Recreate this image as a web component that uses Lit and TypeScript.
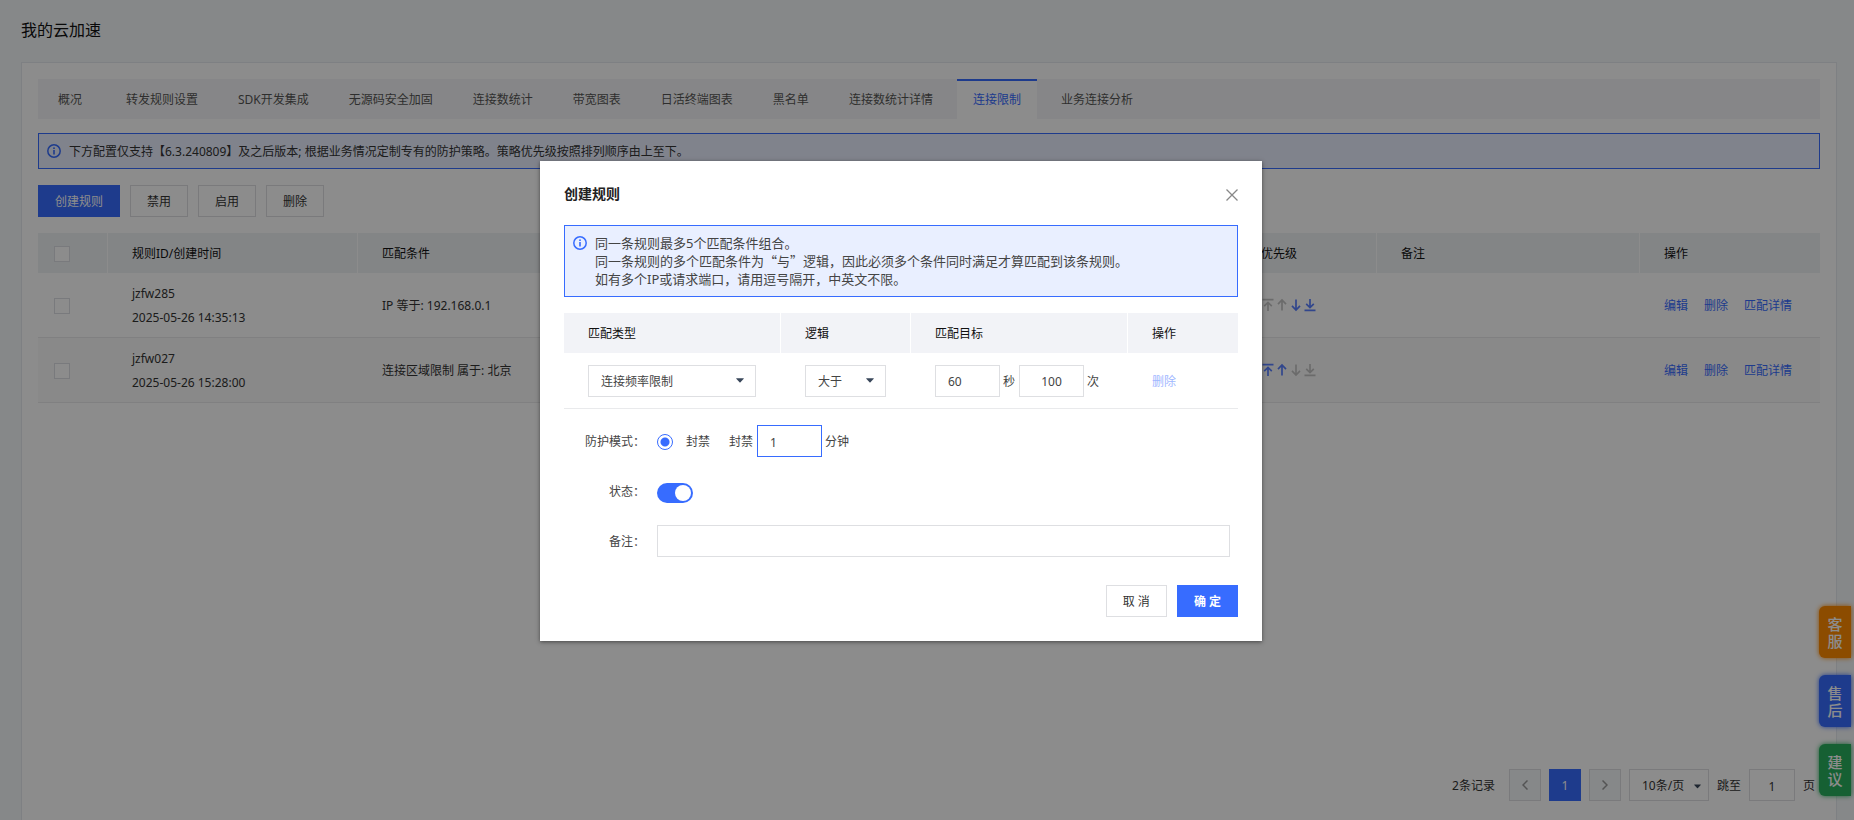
import { LitElement, html, css, svg, nothing } from "lit";
import { customElement, property } from "lit/decorators.js";
import { classMap } from "lit/directives/class-map.js";

const shared = css`
  *,
  *::before,
  *::after {
    box-sizing: border-box;
  }
  button,
  input,
  select {
    font: inherit;
    color: inherit;
    border-radius: 0;
    margin: 0;
  }
  a {
    color: #376cff;
    text-decoration: none;
  }
  .btn {
    height: 32px;
    padding: 2px 16px 0;
    border: 1px solid #dedfe2;
    background: #fff;
    color: #333;
  }
  .btn.primary {
    border-color: #376cff;
    background: #376cff;
    color: #fff;
  }
  .field {
    width: 65px;
    height: 32px;
    padding: 2px 12px 0;
    border: 1px solid #dedfe2;
    background: #fff;
    outline: none;
  }
  .center {
    text-align: center;
  }
  .select {
    position: relative;
    display: inline-flex;
    align-items: center;
  }
  .select select {
    appearance: none;
    width: 100%;
    height: 32px;
    padding: 2px 12px 0;
    border: 1px solid #dedfe2;
    background: #fff;
  }
  .select svg {
    position: absolute;
    right: 12px;
    pointer-events: none;
  }
  table {
    width: 100%;
    table-layout: fixed;
    border-collapse: separate;
    border-spacing: 0;
  }
  th {
    height: 40px;
    padding: 2px 0 0 24px;
    font-weight: 400;
    color: #111;
    text-align: left;
    background: #f2f3f7;
    border-right: 1px solid #fff;
  }
  th:last-child {
    border-right: 0;
  }
  td {
    border-bottom: 1px solid #e9eaec;
  }
`;

const caret = html`<svg width="8" height="5" viewBox="0 0 8 5" aria-hidden="true">
  <path d="M0.300 0.300h7.400v0.500L4.500 4.300Q4 4.800 3.500 4.300L0.300 0.800z" fill="#39475a" />
</svg>`;

@customElement("info-notice")
export class InfoNotice extends LitElement {
  static styles = css`
    :host {
      display: flex;
      gap: 8px;
      padding: 8px;
      border: 1px solid #376cff;
      background: #e9efff;
      color: #333;
    }
    svg {
      flex: none;
      margin-top: 2px;
    }
  `;
  render() {
    return html`<svg width="14" height="14" viewBox="0 0 14 14" aria-hidden="true">
        <circle cx="7" cy="7" r="6.200" fill="none" stroke="#376cff" stroke-width="1.500" />
        <rect x="6.200" y="3.400" width="1.600" height="1.600" fill="#376cff" />
        <rect x="6.200" y="6" width="1.600" height="4.500" fill="#376cff" />
      </svg>
      <div><slot></slot></div>`;
  }
}

@customElement("rule-dialog")
export class RuleDialog extends LitElement {
  static styles = [
    shared,
    css`
      :host {
        display: block;
        width: 722px;
        padding: 24px;
        background: #fff;
        color: #444;
        box-shadow: 0 1px 4px rgba(0, 0, 0, 0.5);
      }
      header {
        display: flex;
        justify-content: space-between;
        align-items: center;
        height: 20px;
        margin-bottom: 20px;
      }
      h2 {
        margin: 0;
        padding-bottom: 2px;
        font-size: 14px;
        font-weight: 700;
        line-height: 18px;
        color: #222;
      }
      .close {
        display: flex;
        padding: 0;
        border: 0;
        background: none;
      }
      info-notice {
        font-size: 13px;
        line-height: 18px;
        margin-bottom: 16px;
        color: #444;
      }
      p {
        margin: 0;
      }
      .quote {
        font-family: "Noto Sans CJK SC", sans-serif;
      }
      td {
        height: 56px;
        padding: 0 0 0 24px;
      }
      .type {
        width: 168px;
      }
      .logic {
        width: 81px;
      }
      .target {
        display: flex;
        align-items: center;
      }
      .unit {
        margin: 0 4px 0 3px;
        padding-top: 2px;
      }
      .faded {
        display: inline-block;
        padding-top: 2px;
        color: #9fb7ff;
      }
      .form {
        display: grid;
        grid-template-columns: 93px 1fr;
        row-gap: 18px;
        margin: 16px 8px 28px 0;
      }
      .name {
        padding-right: 12px;
        line-height: 34px;
        height: 32px;
        text-align: right;
      }
      .row {
        display: flex;
        align-items: center;
      }
      .row label {
        padding-top: 2px;
      }
      .radio {
        appearance: none;
        width: 16px;
        height: 16px;
        border: 1px solid #376cff;
        border-radius: 50%;
        background: radial-gradient(circle, #376cff 4px, #fff 5px);
        margin: 2px 13px 0 0;
      }
      .gap {
        margin: 0 4px 0 19px;
      }
      .active {
        border-color: #376cff;
      }
      .switch {
        appearance: none;
        width: 36px;
        height: 20px;
        padding: 2px;
        border-radius: 10px;
        background: #376cff;
        display: flex;
        justify-content: flex-end;
        margin-top: 4px;
      }
      .switch::before {
        content: "";
        width: 16px;
        height: 16px;
        border-radius: 50%;
        background: #fff;
      }
      .wide {
        width: 100%;
      }
      footer {
        display: flex;
        justify-content: flex-end;
        gap: 10px;
      }
      .strong {
        font-weight: 700;
      }
    `,
  ];
  render() {
    return html`
      <header>
        <h2>创建规则</h2>
        <button class="close" aria-label="关闭">
          <svg width="12" height="12" viewBox="0 0 12 12">
            <path d="M0.500 0.500l11 11M11.500 0.500l-11 11" stroke="#888" stroke-width="1.300" />
          </svg>
        </button>
      </header>
      <info-notice>
        <p>同一条规则最多5个匹配条件组合。</p>
        <p>同一条规则的多个匹配条件为<span class="quote" lang="zh-CN">“与”</span>逻辑，因此必须多个条件同时满足才算匹配到该条规则。</p>
        <p>如有多个IP或请求端口，请用逗号隔开，中英文不限。</p>
      </info-notice>
      <table>
        <colgroup>
          <col width="217" />
          <col width="130" />
          <col width="217" />
          <col />
        </colgroup>
        <thead>
          <tr>
            <th>匹配类型</th>
            <th>逻辑</th>
            <th>匹配目标</th>
            <th>操作</th>
          </tr>
        </thead>
        <tbody>
          <tr>
            <td>
              <span class="select type">
                <select aria-label="匹配类型">
                  <option>连接频率限制</option>
                </select>
                ${caret}
              </span>
            </td>
            <td>
              <span class="select logic">
                <select aria-label="逻辑">
                  <option>大于</option>
                </select>
                ${caret}
              </span>
            </td>
            <td>
              <div class="target">
                <input class="field" aria-label="秒" value="60" />
                <span class="unit">秒</span>
                <input class="field center" aria-label="次" value="100" />
                <span class="unit">次</span>
              </div>
            </td>
            <td><a class="faded" href="#">删除</a></td>
          </tr>
        </tbody>
      </table>
      <div class="form">
        <span class="name">防护模式：</span>
        <div class="row">
          <input class="radio" type="radio" id="ban" name="mode" checked />
          <label for="ban">封禁</label>
          <label class="gap" for="minutes">封禁</label>
          <input class="field active" id="minutes" value="1" />
          <span class="unit">分钟</span>
        </div>
        <label class="name" for="status">状态：</label>
        <div class="row"><input class="switch" type="checkbox" role="switch" id="status" checked /></div>
        <label class="name" for="note">备注：</label>
        <input class="field wide" id="note" />
      </div>
      <footer>
        <button class="btn">取 消</button>
        <button class="btn primary strong">确 定</button>
      </footer>
    `;
  }
}

const glyphs = {
  top: svg`<path d="M1.500 1.700h11M7 13V4.500M3.200 8.200L7 4.400l3.800 3.800" />`,
  up: svg`<path d="M7 12.500V2M3 6.200L7 2l4 4.200" />`,
  down: svg`<path d="M7 1.500V12M3 7.800L7 12l4-4.200" />`,
  bottom: svg`<path d="M1.500 12.300h11M7 1V9.500M3.200 5.800L7 9.600l3.800-3.800" />`,
};
type Move = keyof typeof glyphs;

interface Rule {
  id: string;
  time: string;
  match: string;
  moves: Move[];
}

@customElement("app-root")
export class AppRoot extends LitElement {
  @property({ attribute: false }) tabs = [
    "概况",
    "转发规则设置",
    "SDK开发集成",
    "无源码安全加固",
    "连接数统计",
    "带宽图表",
    "日活终端图表",
    "黑名单",
    "连接数统计详情",
    "连接限制",
    "业务连接分析",
  ];
  @property({ attribute: false }) active = "连接限制";
  @property({ attribute: false }) rules: Rule[] = [
    { id: "jzfw285", time: "2025-05-26 14:35:13", match: "IP 等于: 192.168.0.1", moves: ["down", "bottom"] },
    { id: "jzfw027", time: "2025-05-26 15:28:00", match: "连接区域限制 属于: 北京", moves: ["top", "up"] },
  ];

  static styles = [
    shared,
    css`
      :host {
        display: block;
        position: relative;
        height: 100vh;
        overflow: hidden;
        font: 12px/18px "Noto Sans", "Noto Sans CJK SC", sans-serif;
        color: #333;
        background: #f5f7fa;
      }
      .page {
        display: flex;
        flex-direction: column;
        height: 100%;
        padding: 20px 17px 0 21px;
      }
      h1 {
        margin: 0 0 22px;
        font-size: 16px;
        font-weight: 400;
        line-height: 20px;
        color: #111;
      }
      .card {
        flex: 1;
        display: flex;
        flex-direction: column;
        padding: 16px 16px 19px;
        border: 1px solid #e6e9ee;
        border-bottom: 0;
        background: #fff;
      }
      nav {
        display: flex;
        gap: 8px;
        height: 40px;
        margin-bottom: 14px;
        background: #f5f5f7;
      }
      nav a {
        min-width: 64px;
        padding: 0 16px;
        border-top: 2px solid transparent;
        line-height: 38px;
        text-align: center;
        color: #555;
      }
      nav a.on {
        border-color: #376cff;
        background: #fff;
        color: #376cff;
      }
      .tip {
        padding-bottom: 6px;
        line-height: 20px;
      }
      .actions {
        display: flex;
        gap: 10px;
        margin: 16px 0;
      }
      .rules th {
        background: #eff2f5;
      }
      .rules td {
        height: 65px;
        padding: 2px 0 0 24px;
        line-height: 24px;
      }
      .rules tbody tr:nth-child(2) td {
        background: #fafafa;
      }
      .rules .pick {
        padding-left: 16px;
      }
      .pick input {
        display: block;
        appearance: none;
        width: 16px;
        height: 16px;
        border: 1px solid #dcdfe3;
        background: #fff;
      }
      .moves {
        display: flex;
      }
      .moves button {
        display: flex;
        width: 14px;
        padding: 0 0 2px;
        border: 0;
        background: none;
        color: #5a80ff;
      }
      .moves button:disabled {
        color: #c4c4c4;
      }
      .moves svg {
        fill: none;
        stroke: currentColor;
        stroke-width: 1.7;
      }
      .links {
        display: flex;
        gap: 16px;
      }
      .pager {
        display: flex;
        align-items: center;
        justify-content: flex-end;
        gap: 8px;
        margin-top: auto;
        padding-right: 5px;
      }
      .word {
        padding-top: 2px;
      }
      .total {
        margin-right: 6px;
      }
      .pager .btn {
        display: flex;
        align-items: center;
        justify-content: center;
        width: 32px;
        padding: 2px 0 0;
      }
      .pager .btn:disabled {
        padding: 0;
        background: #f5f7fa;
        color: #999;
      }
      .size {
        width: 80px;
      }
      .pager .size svg {
        right: 8px;
        width: 7px;
        margin-top: 2px;
      }
      .jump {
        width: 46px;
      }
      .side {
        position: absolute;
        right: 3px;
        bottom: 24px;
        display: grid;
        gap: 17px;
      }
      .side button {
        width: 32px;
        height: 52px;
        padding: 2px 8px 0;
        border: 0;
        border-radius: 6px 0 0 6px;
        color: #fff;
        font-size: 15px;
        font-weight: 500;
        line-height: 17px;
      }
      .orange {
        background: #ff8a00;
        box-shadow: 0 0 5px #ff8a00;
      }
      .blue {
        background: #376cff;
        box-shadow: 0 0 5px #376cff;
      }
      .green {
        background: #29b05d;
        box-shadow: 0 0 5px #29b05d;
      }
      .mask {
        position: absolute;
        inset: 0;
        display: flex;
        justify-content: center;
        align-items: flex-start;
        padding: 161px 52px 0 0;
        background: rgba(0, 0, 0, 0.45);
      }
    `,
  ];

  private row(rule: Rule) {
    return html`<tr>
      <td class="pick"><input type="checkbox" aria-label=${rule.id} /></td>
      <td>${rule.id}<br />${rule.time}</td>
      <td>${rule.match}</td>
      <td>
        <div class="moves">
          ${(Object.keys(glyphs) as Move[]).map(
            (move) => html`<button aria-label=${move} ?disabled=${!rule.moves.includes(move)}>
              <svg width="14" height="14" viewBox="0 0 14 14">${glyphs[move]}</svg>
            </button>`
          )}
        </div>
      </td>
      <td>${nothing}</td>
      <td>
        <div class="links"><a href="#">编辑</a><a href="#">删除</a><a href="#">匹配详情</a></div>
      </td>
    </tr>`;
  }

  render() {
    return html`
      <div class="page">
        <h1>我的云加速</h1>
        <main class="card">
          <nav>
            ${this.tabs.map((tab) => html`<a href="#" class=${classMap({ on: tab === this.active })}>${tab}</a>`)}
          </nav>
          <info-notice class="tip">下方配置仅支持【6.3.240809】及之后版本; 根据业务情况定制专有的防护策略。策略优先级按照排列顺序由上至下。</info-notice>
          <div class="actions">
            <button class="btn primary">创建规则</button>
            <button class="btn">禁用</button>
            <button class="btn">启用</button>
            <button class="btn">删除</button>
          </div>
          <table class="rules">
            <colgroup>
              <col width="70" />
              <col width="250" />
              <col />
              <col width="140" />
              <col width="263" />
              <col width="180" />
            </colgroup>
            <thead>
              <tr>
                <th class="pick"><input type="checkbox" aria-label="全选" /></th>
                <th>规则ID/创建时间</th>
                <th>匹配条件</th>
                <th>优先级</th>
                <th>备注</th>
                <th>操作</th>
              </tr>
            </thead>
            <tbody>
              ${this.rules.map((rule) => this.row(rule))}
            </tbody>
          </table>
          <div class="pager">
            <span class="word total">2条记录</span>
            <button class="btn" disabled aria-label="上一页">
              <svg width="6" height="10" viewBox="0 0 6 10"><path d="M5.500 0.500L1 5l4.500 4.500" fill="none" stroke="currentColor" stroke-width="1.500" /></svg>
            </button>
            <button class="btn primary">1</button>
            <button class="btn" disabled aria-label="下一页">
              <svg width="6" height="10" viewBox="0 0 6 10"><path d="M0.500 0.500L5 5L0.500 9.500" fill="none" stroke="currentColor" stroke-width="1.500" /></svg>
            </button>
            <span class="select size">
              <select aria-label="每页条数">
                <option>10条/页</option>
              </select>
              ${caret}
            </span>
            <label class="word" for="jump">跳至</label>
            <input class="field jump center" id="jump" value="1" />
            <span class="word">页</span>
          </div>
        </main>
      </div>
      <div class="side">
        <button class="orange">客服</button>
        <button class="blue">售后</button>
        <button class="green">建议</button>
      </div>
      <div class="mask"><rule-dialog role="dialog" aria-label="创建规则"></rule-dialog></div>
    `;
  }
}
